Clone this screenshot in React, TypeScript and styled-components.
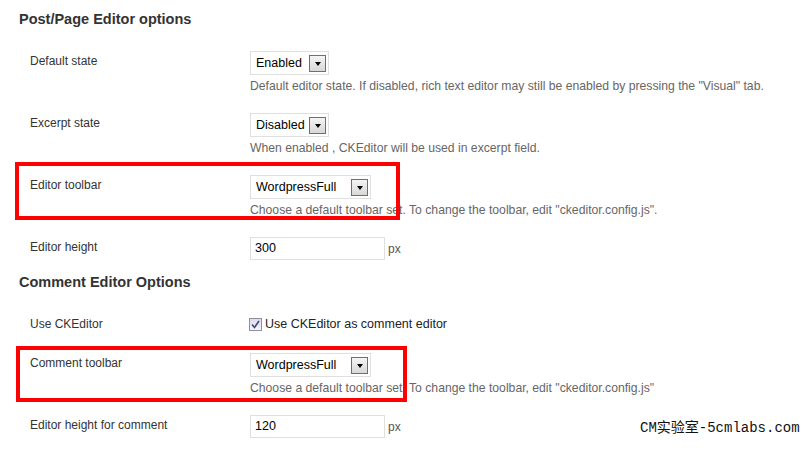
import React from 'react';
import styled, { createGlobalStyle, css } from 'styled-components';

const GlobalStyle = createGlobalStyle`
  html, body {
    margin: 0;
    padding: 0;
    background: #fff;
  }
  body {
    font-family: 'Liberation Sans', Arial, sans-serif;
    color: #333;
  }
`;

const Page = styled.div`
  position: relative;
  width: 806px;
  height: 455px;
  overflow: hidden;
  padding-top: 10px;
  box-sizing: border-box;
`;

const Heading = styled.h3<{ $mt?: number }>`
  margin: ${p => p.$mt || 0}px 0 13px 19px;
  font-size: 14.5px;
  line-height: 18px;
  font-weight: 700;
  color: #333;
`;

type Mark = { top: number; left: number; width: number; height: number };

const Row = styled.div<{ $mark?: Mark }>`
  position: relative;
  display: grid;
  grid-template-columns: 220px 1fr;
  padding: 10px 0 9px 30px;

  ${p => p.$mark && css`
    &::after {
      content: '';
      position: absolute;
      top: ${p.$mark.top}px;
      left: ${p.$mark.left}px;
      width: ${p.$mark.width}px;
      height: ${p.$mark.height}px;
      border: 4px solid #ff0000;
      box-sizing: border-box;
      pointer-events: none;
    }
  `}
`;

const Label = styled.div`
  font-size: 12px;
  line-height: 20px;
  color: #333;
`;

const Field = styled.div`
  display: flex;
  flex-direction: column;
  align-items: flex-start;
`;

const Line = styled.div`
  display: flex;
  align-items: center;
  gap: 3px;
`;

const SelectBox = styled.div<{ $width: number }>`
  display: flex;
  align-items: center;
  justify-content: space-between;
  width: ${p => p.$width}px;
  height: 24px;
  box-sizing: border-box;
  border: 1px solid #dfdfdf;
  background: #fff;
  padding: 0 2px 0 5px;
  font-size: 12.5px;
  color: #000;
`;

const Arrow = styled.span`
  display: flex;
  align-items: center;
  justify-content: center;
  width: 17px;
  height: 17px;
  box-sizing: border-box;
  border: 1px solid #6f6f6f;
  background: linear-gradient(#f4f4f4, #d8d8d8);

  &::before {
    content: '';
    border-left: 3.5px solid transparent;
    border-right: 3.5px solid transparent;
    border-top: 4px solid #000;
    margin-top: 1px;
  }
`;

const TextBox = styled.div`
  width: 135px;
  height: 23px;
  box-sizing: border-box;
  border: 1px solid #dfdfdf;
  padding: 0 4px;
  font-size: 12.5px;
  line-height: 21px;
  color: #000;
`;

const Unit = styled.span`
  font-size: 12px;
  color: #555;
`;

const Desc = styled.div`
  margin-top: 3px;
  font-size: 12.2px;
  line-height: 16px;
  color: #666;
  white-space: nowrap;
`;

const CheckLine = styled.label`
  display: flex;
  align-items: center;
  gap: 3px;
  height: 20px;
  font-size: 12.5px;
  color: #222;
  margin-left: -1px;
`;

const CheckBox = styled.span`
  display: inline-flex;
  align-items: center;
  justify-content: center;
  width: 13px;
  height: 13px;
  box-sizing: border-box;
  border: 1px solid #8f8f9d;
  background: linear-gradient(#dcdcec, #f4f4fa);
`;

const Watermark = styled.div`
  position: absolute;
  left: 640px;
  top: 419px;
  font-family: 'Liberation Mono', 'Noto Sans CJK SC', monospace;
  font-size: 14px;
  line-height: 18px;
  color: #111;
`;

const Select = ({ value, width }: { value: string; width: number }) => (
  <SelectBox $width={width}>
    <span>{value}</span>
    <Arrow />
  </SelectBox>
);

export default function App() {
  return (
    <Page>
      <GlobalStyle />
      <Heading>Post/Page Editor options</Heading>

      <Row>
        <Label>Default state</Label>
        <Field>
          <Select value='Enabled' width={79} />
          <Desc>Default editor state. If disabled, rich text editor may still be enabled by pressing the "Visual" tab.</Desc>
        </Field>
      </Row>

      <Row>
        <Label>Excerpt state</Label>
        <Field>
          <Select value='Disabled' width={79} />
          <Desc>When enabled , CKEditor will be used in excerpt field.</Desc>
        </Field>
      </Row>

      <Row $mark={{ top: -3, left: 15, width: 385, height: 58 }}>
        <Label>Editor toolbar</Label>
        <Field>
          <Select value='WordpressFull' width={121} />
          <Desc>Choose a default toolbar set. To change the toolbar, edit "ckeditor.config.js".</Desc>
        </Field>
      </Row>

      <Row>
        <Label>Editor height</Label>
        <Field>
          <Line>
            <TextBox>300</TextBox>
            <Unit>px</Unit>
          </Line>
        </Field>
      </Row>

      <Heading $mt={4}>Comment Editor Options</Heading>

      <Row>
        <Label>Use CKEditor</Label>
        <Field>
          <CheckLine>
            <CheckBox>
              <svg width='9' height='9' viewBox='0 0 9 9'>
                <path d='M1 4.5 L3.5 7.5 L8 1' fill='none' stroke='#3c4a78' strokeWidth='1.6' />
              </svg>
            </CheckBox>
            Use CKEditor as comment editor
          </CheckLine>
        </Field>
      </Row>

      <Row $mark={{ top: 3, left: 16, width: 391, height: 56 }}>
        <Label>Comment toolbar</Label>
        <Field>
          <Select value='WordpressFull' width={121} />
          <Desc>Choose a default toolbar set. To change the toolbar, edit "ckeditor.config.js"</Desc>
        </Field>
      </Row>

      <Row>
        <Label>Editor height for comment</Label>
        <Field>
          <Line>
            <TextBox>120</TextBox>
            <Unit>px</Unit>
          </Line>
        </Field>
      </Row>

      <Watermark>CM实验室-5cmlabs.com</Watermark>
    </Page>
  );
}
